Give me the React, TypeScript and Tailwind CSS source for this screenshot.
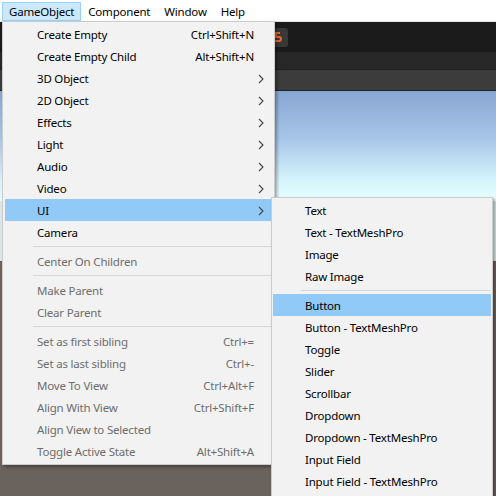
import React from "react";

type MenuItem =
  | { label: string; shortcut?: string; arrow?: boolean; disabled?: boolean; active?: boolean }
  | "sep";

const gameObjectItems: MenuItem[] = [
  { label: "Create Empty", shortcut: "Ctrl+Shift+N" },
  { label: "Create Empty Child", shortcut: "Alt+Shift+N" },
  { label: "3D Object", arrow: true },
  { label: "2D Object", arrow: true },
  { label: "Effects", arrow: true },
  { label: "Light", arrow: true },
  { label: "Audio", arrow: true },
  { label: "Video", arrow: true },
  { label: "UI", arrow: true, active: true },
  { label: "Camera" },
  "sep",
  { label: "Center On Children", disabled: true },
  "sep",
  { label: "Make Parent", disabled: true },
  { label: "Clear Parent", disabled: true },
  "sep",
  { label: "Set as first sibling", shortcut: "Ctrl+=", disabled: true },
  { label: "Set as last sibling", shortcut: "Ctrl+-", disabled: true },
  { label: "Move To View", shortcut: "Ctrl+Alt+F", disabled: true },
  { label: "Align With View", shortcut: "Ctrl+Shift+F", disabled: true },
  { label: "Align View to Selected", disabled: true },
  { label: "Toggle Active State", shortcut: "Alt+Shift+A", disabled: true },
];

const uiItems: MenuItem[] = [
  { label: "Text" },
  { label: "Text - TextMeshPro" },
  { label: "Image" },
  { label: "Raw Image" },
  "sep",
  { label: "Button", active: true },
  { label: "Button - TextMeshPro" },
  { label: "Toggle" },
  { label: "Slider" },
  { label: "Scrollbar" },
  { label: "Dropdown" },
  { label: "Dropdown - TextMeshPro" },
  { label: "Input Field" },
  { label: "Input Field - TextMeshPro" },
];

function Chevron() {
  return (
    <svg width="6" height="10" viewBox="0 0 6 10" className="ml-[4px]">
      <path d="M1 1l4 4-4 4" fill="none" stroke="#444" strokeWidth="1.1" />
    </svg>
  );
}

function MenuRows({ items, withArrows }: { items: MenuItem[]; withArrows: boolean }) {
  return (
    <>
      {items.map((item, i) =>
        item === "sep" ? (
          <div key={i} className="my-[3px] ml-[28px] h-px bg-[#d7d7d7]" />
        ) : (
          <div
            key={i}
            className={`flex h-[22px] items-center pl-[32px] pt-[2px] ${item.active ? "bg-[#91c9f7]" : ""} ${
              item.disabled ? "text-[#6d6d6d]" : "text-black"
            }`}
          >
            <span className="flex-1 whitespace-nowrap">{item.label}</span>
            {item.shortcut && <span className="whitespace-nowrap">{item.shortcut}</span>}
            {withArrows && <span className="flex w-[18px] items-center">{item.arrow && <Chevron />}</span>}
          </div>
        )
      )}
    </>
  );
}

export default function App() {
  return (
    <div className="relative flex h-[496px] w-[496px] flex-col overflow-hidden bg-[#3c3c3c] font-['Noto_Sans',sans-serif] text-[11.5px] leading-none tracking-[-0.2px]">
      {/* menu bar */}
      <div className="flex h-[21px] items-end bg-white pl-[2px] text-black">
        <div className="flex h-[19px] items-center border border-[#99d1ff] bg-[#cce8ff] px-[6px]">GameObject</div>
        <div className="flex h-[19px] items-center border border-transparent px-[6px]">Component</div>
        <div className="flex h-[19px] items-center border border-transparent px-[6px]">Window</div>
        <div className="flex h-[19px] items-center border border-transparent px-[6px]">Help</div>
      </div>
      <div className="h-px bg-[#e6e6e6]" />

      {/* editor toolbar */}
      <div className="flex h-[30px] items-center bg-[#1b1b1b] pl-[268px]">
        <div className="flex h-[19px] w-[20px] items-center justify-center rounded-[3px] bg-[#383838]">
          <svg width="8" height="12" viewBox="0 0 8 12">
            <path d="M1 2h5M2 2v4h3a2 2 0 0 1 0 4H1" fill="none" stroke="#e8642c" strokeWidth="2" />
          </svg>
        </div>
      </div>
      <div className="h-[18px] border-b border-[#1e1e1e] bg-[#282828]" />
      <div className="h-[21px] border-b border-[#232323] bg-[#3c3c3c]" />

      {/* scene view */}
      <div className="flex flex-1 flex-col">
        <div className="h-[110px] bg-[linear-gradient(to_bottom,#87a6d2,#a9c7e8_45%,#d4f3fb_80%,#e6ffff)]" />
        <div className="h-[60px] bg-[#dce7ea]" />
        <div className="relative flex-1 bg-[#6a625c]">
          <svg className="absolute inset-0 h-full w-full" preserveAspectRatio="none">
            <g stroke="#7b736c" strokeWidth="1">
              <line x1="0" y1="310" x2="75" y2="274" />
              <line x1="30" y1="320" x2="80" y2="274" />
              <line x1="110" y1="318" x2="150" y2="274" />
              <line x1="185" y1="320" x2="220" y2="276" />
              <line x1="0" y1="296" x2="270" y2="282" />
            </g>
          </svg>
        </div>
      </div>

      {/* GameObject dropdown */}
      <div className="absolute left-[2px] top-[21px] w-[273px] border border-[#cccccc] bg-[#f2f2f2] px-[2px] pb-[2px] pt-px shadow-[2px_2px_3px_rgba(0,0,0,0.35)]">
        <MenuRows items={gameObjectItems} withArrows />
      </div>

      {/* UI submenu, runs past the bottom of the window */}
      <div className="absolute left-[271px] top-[197px] w-[222px] border border-[#cccccc] bg-[#f2f2f2] px-px pb-[20px] pt-px shadow-[2px_2px_3px_rgba(0,0,0,0.35)]">
        <MenuRows items={uiItems} withArrows={false} />
      </div>
    </div>
  );
}
